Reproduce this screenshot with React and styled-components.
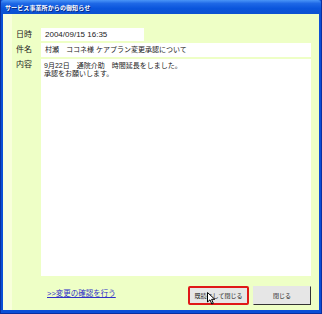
import React from 'react';
import styled, { createGlobalStyle } from 'styled-components';

const GlobalStyle = createGlobalStyle`
  html, body { margin: 0; padding: 0; background: #fff; }
  body { font-family: "Liberation Sans", "Noto Sans CJK JP", sans-serif; }
`;

const Window = styled.div`
  width: 322px;
  height: 314px;
  box-sizing: border-box;
  display: flex;
  flex-direction: column;
  background: #0b4fd6;
  border-left: 1px solid #0a2fa0;
  border-right: 1px solid #0a2fa0;
  border-bottom: 1px solid #0a2fa0;
  padding: 0 2px 3px 2px;
  position: relative;
`;

const TitleBar = styled.div`
  height: 14px;
  margin: 0 -2px;
  padding-left: 4px;
  display: flex;
  align-items: center;
  background: linear-gradient(to bottom, #4a95f7 0%, #1e68e6 25%, #0a55dc 60%, #0c52d0 100%);
  color: #fff;
  font-size: 6px;
  font-weight: bold;
  letter-spacing: 0.1px;
  text-shadow: 1px 1px 0 #0a2a80;
  border-radius: 3px 3px 0 0;
`;

const Body = styled.div`
  flex: 1;
  background: linear-gradient(to right, #f8ffdc 0, #f8ffdc 9px, #eeffc6 9px);
  display: grid;
  grid-template-columns: 38px 270px;
  grid-template-rows: 13px 14px 1fr auto;
  row-gap: 2px;
  padding: 14px 8px 0 0;
`;

const Label = styled.div`
  padding-left: 13px;
  font-size: 8px;
  color: #222;
  line-height: ${p => p.$top ? '10px' : p.$h};
  padding-top: ${p => p.$top ? '1px' : '0'};
`;

const Field = styled.div`
  width: ${p => p.$w || '270px'};
  background: #fff;
  box-sizing: border-box;
  padding: 0 4px;
  font-size: ${p => p.$size || '7px'};
  color: #222;
  line-height: ${p => p.$h};
  white-space: nowrap;
`;

const Area = styled.div`
  background: #fff;
  padding: 3px 3px;
  font-size: 7px;
  line-height: 8px;
  color: #222;
`;

const Footer = styled.div`
  grid-column: 1 / 3;
  display: flex;
  align-items: center;
  padding: 8px 0 5px 44px;
`;

const Link = styled.a`
  font-size: 7.5px;
  color: #3030c8;
  text-decoration: underline;
  margin-right: auto;
  margin-top: -7px;
`;

const Button = styled.button`
  width: ${p => p.$w};
  height: 19px;
  margin-left: 4px;
  box-sizing: border-box;
  font-family: inherit;
  font-size: 6px;
  color: #222;
  background: #e6e6e6;
  padding: 0;
  border: ${p => p.$focus ? '2px solid #e01818' : '1px solid #e6e6e6'};
  border-right-color: ${p => p.$focus ? '#e01818' : '#333'};
  border-bottom-color: ${p => p.$focus ? '#e01818' : '#333'};
  border-radius: ${p => p.$focus ? '2px' : '0'};
`;

const Cursor = styled.svg`
  position: absolute;
  left: 206px;
  top: 292px;
`;

export default function App() {
  return (
    <>
      <GlobalStyle />
      <Window>
        <TitleBar>サービス事業所からの御知らせ</TitleBar>
        <Body>
          <Label $h="13px">日時</Label>
          <Field $w="103px" $h="13px" $size="8px">2004/09/15 16:35</Field>
          <Label $h="14px">件名</Label>
          <Field $h="14px">村瀬　ココネ様 ケアプラン変更承認について</Field>
          <Label $top>内容</Label>
          <Area>
            9月22日　通院介助　時間延長をしました。<br />
            承認をお願いします。
          </Area>
          <Footer>
            <Link href="#">&gt;&gt;変更の確認を行う</Link>
            <Button $w="61px" $focus>既読にして閉じる</Button>
            <Button $w="58px">閉じる</Button>
          </Footer>
        </Body>
        <Cursor width="9" height="13" viewBox="0 0 9 13">
          <path d="M0.5 0.5 L0.5 10 L3 7.8 L4.8 12 L6.3 11.3 L4.6 7.3 L7.8 7.3 Z" fill="#fff" stroke="#000" strokeWidth="1" />
        </Cursor>
      </Window>
    </>
  );
}
